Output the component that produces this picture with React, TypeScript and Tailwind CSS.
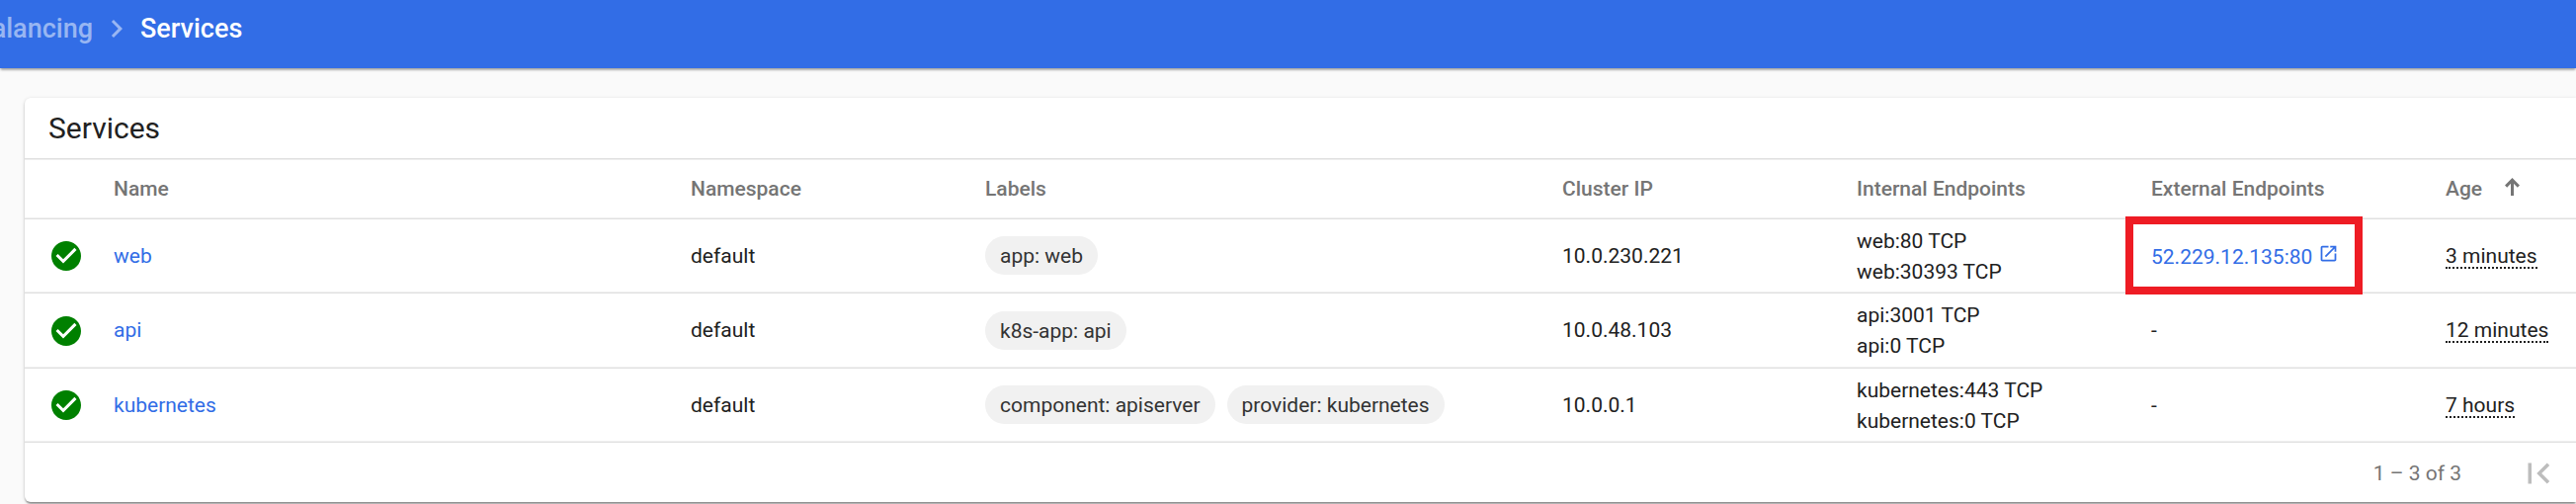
import { ReactNode } from "react";

type Service = {
  name: string;
  labels: string[];
  ip: string;
  internal: string[];
  external?: string;
  age: string;
};

const services: Service[] = [
  {
    name: "web",
    labels: ["app: web"],
    ip: "10.0.230.221",
    internal: ["web:80 TCP", "web:30393 TCP"],
    external: "52.229.12.135:80",
    age: "3 minutes",
  },
  {
    name: "api",
    labels: ["k8s-app: api"],
    ip: "10.0.48.103",
    internal: ["api:3001 TCP", "api:0 TCP"],
    age: "12 minutes",
  },
  {
    name: "kubernetes",
    labels: ["component: apiserver", "provider: kubernetes"],
    ip: "10.0.0.1",
    internal: ["kubernetes:443 TCP", "kubernetes:0 TCP"],
    age: "7 hours",
  },
];

const columns =
  "grid grid-cols-[90px_584px_298px_584px_298px_298px_298px_132px] items-center";

function Icon({ d, className }: { d: string; className: string }) {
  return (
    <svg viewBox="0 0 24 24" className={className} fill="currentColor">
      <path d={d} />
    </svg>
  );
}

function Row({ children, className }: { children: ReactNode; className: string }) {
  return (
    <div className={`${columns} ${className} border-b border-[#e0e0e0] shadow-[inset_0_-1px_0_#f0f0f0]`}>
      {children}
    </div>
  );
}

function ServiceRow({ service, className }: { service: Service; className: string }) {
  return (
    <Row className={className}>
      <Icon
        d="M12 2C6.48 2 2 6.48 2 12s4.480 10 10 10 10-4.480 10-10S17.520 2 12 2zm-2 15l-5-5 1.410-1.410L10 14.170l7.590-7.590L19 8l-9 9z"
        className="ml-6 size-9 text-[#008000]"
      />
      <a className="pt-px text-[#326de6]">{service.name}</a>
      <span className="pt-px">default</span>
      <div className="mb-px flex gap-3">
        {service.labels.map((label) => (
          <span key={label} className="h-[39px] rounded-full bg-[#f1f1f1] px-[15px] leading-[40px] text-[#333]">
            {label}
          </span>
        ))}
      </div>
      <span className="pt-px">{service.ip}</span>
      <div className="pt-px leading-[31px]">
        {service.internal.map((endpoint) => (
          <div key={endpoint}>{endpoint}</div>
        ))}
      </div>
      {service.external ? (
        <div className="relative flex items-center self-stretch text-[#326de6]">
          <div className="absolute -top-[3px] -left-[26px] h-[79px] w-[240px] border-8 border-[#ee1c24]" />
          <a className="mt-[3px]">{service.external}</a>
          <Icon
            d="M19 19H5V5h7V3H5c-1.110 0-2 .9-2 2v14c0 1.100.89 2 2 2h14c1.100 0 2-.9 2-2v-7h-2v7zM14 3v2h3.590l-9.830 9.830 1.410 1.410L19 6.410V10h2V3h-7z"
            className="mb-[5px] ml-[6px] size-[21px]"
          />
        </div>
      ) : (
        <span className="pt-px">-</span>
      )}
      <span className="pt-px">
        <span className="inline-block h-[25px] border-b-2 border-dotted border-[#212121] leading-[25px]">
          {service.age}
        </span>
      </span>
    </Row>
  );
}

export default function App() {
  return (
    <div className="h-[510px] w-[2607px] overflow-hidden bg-[#fafafa] font-['Roboto',sans-serif] text-[21px] text-[#212121]">
      <header className="flex h-[69px] items-start bg-[#326de6] text-[27px] font-medium text-white shadow-[0_3px_2px_-1px_rgba(0,0,0,0.2),0_1px_2px_rgba(0,0,0,0.14),0_1px_4px_rgba(0,0,0,0.12)]">
        <div className="flex h-[57px] items-center">
          <span className="flex w-[94px] justify-end pt-px whitespace-nowrap text-white/50">balancing</span>
          <Icon d="M10 6L8.590 7.410 13.170 12l-4.580 4.590L10 18l6-6z" className="ml-[6px] size-9 text-white/50" />
          <span className="ml-[6px] pt-px">Services</span>
        </div>
      </header>
      <main className="mt-[30px] ml-[25px] h-[409px] rounded-l-md bg-white shadow-[0_3px_2px_-1px_rgba(0,0,0,0.3),0_1px_2px_rgba(0,0,0,0.16),0_1px_4px_rgba(0,0,0,0.12)]">
        <div className="flex h-[63px] items-center border-b border-[#eeeeee] pb-[2px] pl-6 text-[30px] shadow-[inset_0_-1px_0_#e0e0e0]">
          Services
        </div>
        <Row className="h-[60px] font-medium text-[#757575]">
          <span />
          <span>Name</span>
          <span>Namespace</span>
          <span>Labels</span>
          <span>Cluster IP</span>
          <span>Internal Endpoints</span>
          <span>External Endpoints</span>
          <span className="flex items-center">
            Age
            <svg viewBox="0 0 15 18" className="mb-[6px] ml-[23px] h-[18px] w-[15px]" fill="none" stroke="currentColor" strokeWidth="3">
              <path d="M7.500 18V3M1.100 8.600L7.500 2.200l6.400 6.400" />
            </svg>
          </span>
        </Row>
        <ServiceRow service={services[0]} className="h-[75px]" />
        <ServiceRow service={services[1]} className="h-[76px]" />
        <ServiceRow service={services[2]} className="h-[75px]" />
        <footer className="flex h-[60px] items-center justify-end pt-[2px] pr-[17px] text-[#757575]">
          <span className="mr-[57px] pt-px">1 – 3 of 3</span>
          <Icon d="M18.410 16.590L13.820 12l4.590-4.590L17 6l-6 6 6 6zM6 6h2v12H6z" className="size-[42px] text-[#bdbdbd]" />
        </footer>
      </main>
    </div>
  );
}
